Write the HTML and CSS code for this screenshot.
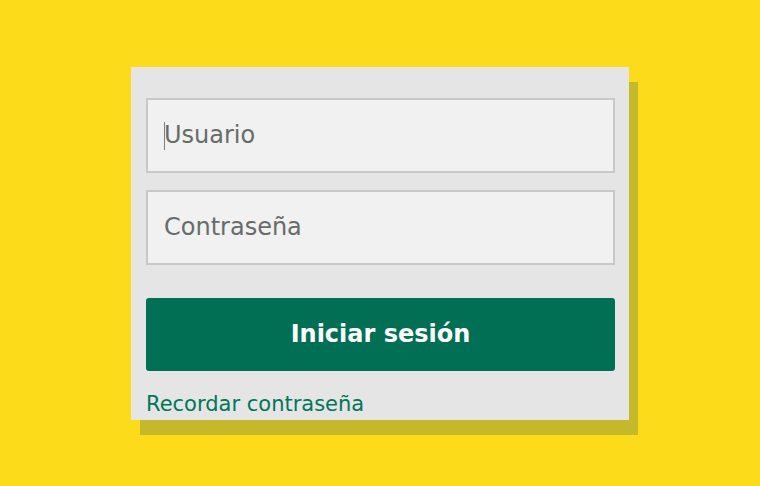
FILE: index.html
```html
<!DOCTYPE html>
<html lang="es">
<head>
<meta charset="utf-8">
<title>Iniciar sesión</title>
<link rel="stylesheet" href="styles.css">
</head>
<body>
<main class="stage">
  <form class="card">
    <div class="field field-focus"><span class="caret"></span><span class="ph">Usuario</span></div>
    <div class="field"><span class="ph">Contraseña</span></div>
    <button type="button" class="btn">Iniciar sesión</button>
    <a class="link" href="#">Recordar contraseña</a>
  </form>
</main>
</body>
</html>
```
FILE: styles.css
```css
html, body {
  margin: 0;
  padding: 0;
}
body {
  background: #fcdb1b;
  font-family: "DejaVu Sans", Verdana, sans-serif;
}
.stage {
  height: 486px;
  display: flex;
  align-items: center;
  justify-content: center;
}
.card {
  width: 498px;
  height: 353px;
  box-sizing: border-box;
  padding: 31px 14px 0 15px;
  background: #e5e5e5;
  box-shadow: 9px 15px 0 #c6b82b;
  display: flex;
  flex-direction: column;
}
.field {
  position: relative;
  height: 75px;
  box-sizing: border-box;
  border: 2px solid #c8c8c8;
  background: #f1f1f1;
  display: flex;
  align-items: center;
  padding-left: 16px;
}
.field + .field {
  margin-top: 17px;
}
.ph {
  font-size: 24px;
  color: #676c6a;
  line-height: 1;
}
.caret {
  position: absolute;
  left: 16px;
  top: 22px;
  width: 1px;
  height: 28px;
  background: #7a7f7d;
}
.btn {
  margin-top: 33px;
  height: 73px;
  border: none;
  border-radius: 3px;
  background: #006f54;
  color: #ffffff;
  font-family: "DejaVu Sans", Verdana, sans-serif;
  font-weight: bold;
  font-size: 24px;
  padding: 0;
  cursor: pointer;
}
.link {
  margin-top: 20px;
  font-size: 21px;
  line-height: 26px;
  color: #007659;
  text-decoration: none;
  align-self: flex-start;
}
```
